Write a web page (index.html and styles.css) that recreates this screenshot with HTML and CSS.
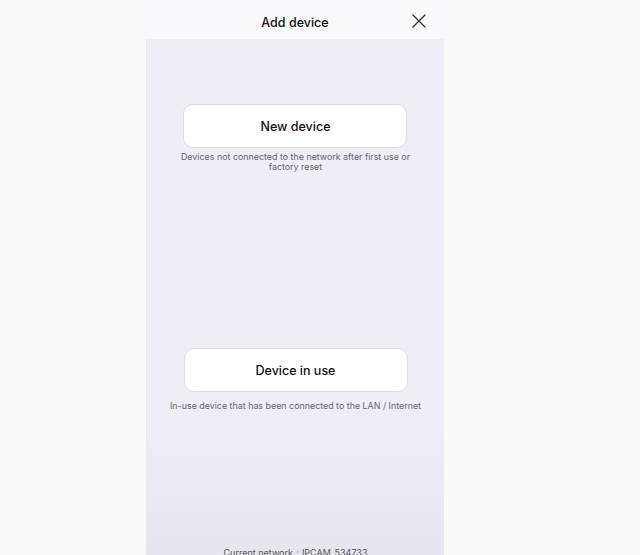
FILE: index.html
```html
<!DOCTYPE html>
<html>
<head>
<meta charset="utf-8">
<link rel="stylesheet" href="styles.css">
</head>
<body>
<div class="page">
  <div class="screen">
    <header class="header">
      <span class="title">Add device</span>
      <svg class="close" width="14" height="14" viewBox="0 0 14 14"><path d="M1 1L13 13M13 1L1 13" stroke="#333" stroke-width="1.3" fill="none" stroke-linecap="round"/></svg>
    </header>
    <main class="body">
      <section class="option first">
        <div class="btn">New device</div>
        <p class="caption">Devices not connected to the network after first use or<br>factory reset</p>
      </section>
      <section class="option second">
        <div class="btn">Device in use</div>
        <p class="caption">In-use device that has been connected to the LAN / Internet</p>
      </section>
      <div class="footer">Current network：IPCAM_534733</div>
    </main>
  </div>
</div>
</body>
</html>
```
FILE: styles.css
```css
html, body {
  margin: 0;
  padding: 0;
  background: #f9f9f9;
  height: 555px;
  overflow: hidden;
}
.page {
  display: flex;
  height: 555px;
  padding-left: 146px;
}
.screen {
  width: 298px;
  display: flex;
  flex-direction: column;
  font-family: Inter, "Liberation Sans", sans-serif;
}
.header {
  height: 39px;
  background: #f9f9fb;
  display: flex;
  align-items: center;
  justify-content: center;
  position: relative;
}
.title {
  font-size: 12.5px;
  font-weight: 500;
  color: #111;
  margin-top: 6px;
}
.close {
  position: absolute;
  right: 18px;
  top: 14px;
}
.body {
  flex: 1;
  background: linear-gradient(#efeef7 0%, #efeef7 75%, #e7e6ee 100%);
  display: flex;
  flex-direction: column;
  align-items: center;
  border-left: 1px solid #e8e7ef;
}
.option {
  display: flex;
  flex-direction: column;
  align-items: center;
}
.first { margin-top: 65px; }
.second { margin-top: 176px; }
.btn {
  width: 222px;
  height: 42px;
  background: #fff;
  border: 1px solid #dcdbe3;
  border-radius: 10px;
  display: flex;
  align-items: center;
  justify-content: center;
  font-size: 12.5px;
  font-weight: 500;
  color: #111;
}
.caption {
  margin: 4px 0 0;
  font-size: 8.9px;
  line-height: 10px;
  color: #66656e;
  text-align: center;
}
.second .caption {
  margin-top: 9px;
}
.footer {
  margin-top: auto;
  margin-bottom: -5px;
  font-size: 9px;
  color: #555;
}
```
